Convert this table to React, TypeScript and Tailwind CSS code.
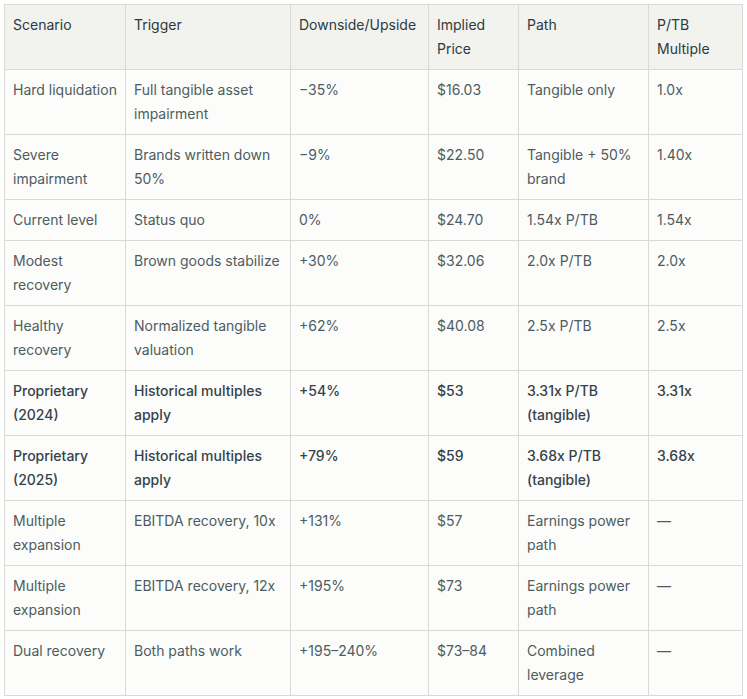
import React from "react";

type Row = { cells: string[]; strong?: boolean };

const rows: Row[] = [
  { cells: ["Hard liquidation", "Full tangible asset impairment", "\u221235%", "$16.03", "Tangible only", "1.0x"] },
  { cells: ["Severe impairment", "Brands written down 50%", "\u22129%", "$22.50", "Tangible + 50% brand", "1.40x"] },
  { cells: ["Current level", "Status quo", "0%", "$24.70", "1.54x P/TB", "1.54x"] },
  { cells: ["Modest recovery", "Brown goods stabilize", "+30%", "$32.06", "2.0x P/TB", "2.0x"] },
  { cells: ["Healthy recovery", "Normalized tangible valuation", "+62%", "$40.08", "2.5x P/TB", "2.5x"] },
  { cells: ["Proprietary (2024)", "Historical multiples apply", "+54%", "$53", "3.31x P/TB (tangible)", "3.31x"], strong: true },
  { cells: ["Proprietary (2025)", "Historical multiples apply", "+79%", "$59", "3.68x P/TB (tangible)", "3.68x"], strong: true },
  { cells: ["Multiple expansion", "EBITDA recovery, 10x", "+131%", "$57", "Earnings power path", "\u2014"] },
  { cells: ["Multiple expansion", "EBITDA recovery, 12x", "+195%", "$73", "Earnings power path", "\u2014"] },
  { cells: ["Dual recovery", "Both paths work", "+195\u2013240%", "$73\u201384", "Combined leverage", "\u2014"] },
];

const headers = ["Scenario", "Trigger", "Downside/Upside", "Implied Price", "Path", "P/TB Multiple"];
const widths = ["w-[121px]", "w-[165px]", "w-[138px]", "w-[90px]", "w-[130px]", "w-[94px]"];

export default function App() {
  return (
    <div className="p-[4px] bg-white min-h-[699px]" style={{ fontFamily: "Inter, 'Noto Sans', sans-serif" }}>
      <table className="border-collapse table-fixed w-[738px] text-[14px] leading-[24px]">
        <colgroup>
          {widths.map((w, i) => (
            <col key={i} className={w} />
          ))}
        </colgroup>
        <thead>
          <tr className="bg-[#f2f2ee]">
            {headers.map((h, i) => (
              <th
                key={i}
                className="border border-[#d9d9d5] px-[8px] pt-[8px] pb-[8px] text-left align-top font-normal text-[#2c3a40]"
              >
                {h}
              </th>
            ))}
          </tr>
        </thead>
        <tbody>
          {rows.map((r, ri) => (
            <tr key={ri} className="bg-[#fcfcfa]">
              {r.cells.map((c, ci) => (
                <td
                  key={ci}
                  className={
                    "border border-[#d9d9d5] px-[8px] pt-[8px] pb-[8px] align-top " +
                    (r.strong ? "font-medium text-[#34434a]" : "font-normal text-[#4d5c61]")
                  }
                >
                  {c}
                </td>
              ))}
            </tr>
          ))}
        </tbody>
      </table>
    </div>
  );
}
